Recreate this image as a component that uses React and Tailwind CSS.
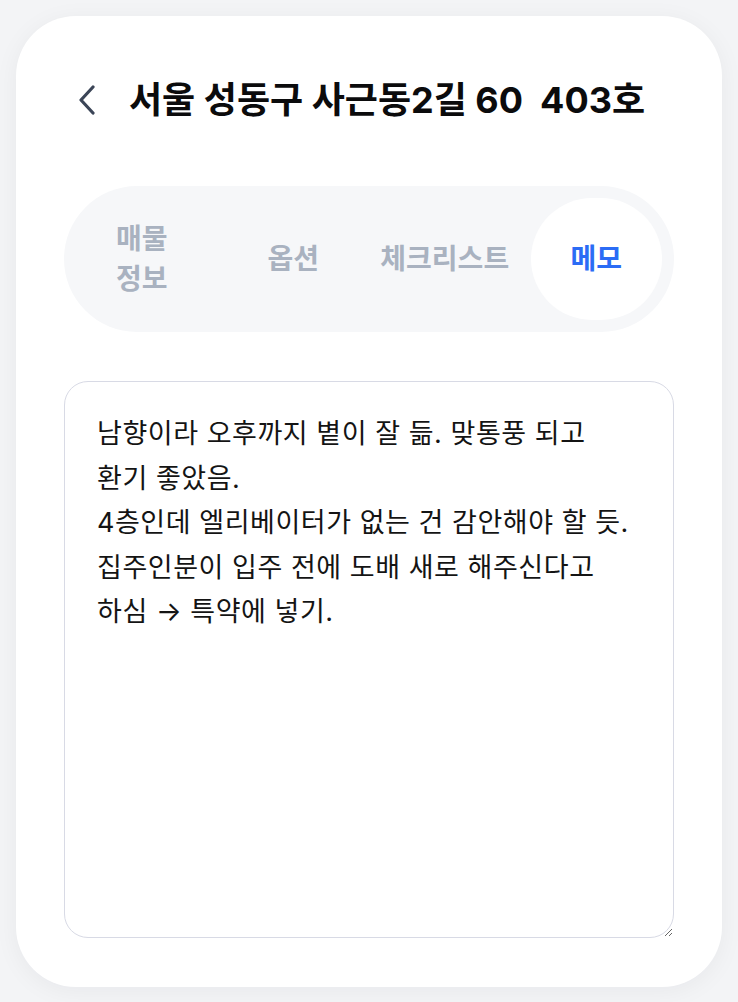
import React, { useState } from "react";

const tabs = ["매물 정보", "옵션", "체크리스트", "메모"];

const initialMemo =
  "남향이라 오후까지 볕이 잘 듦. 맞통풍 되고\n환기 좋았음.\n4층인데 엘리베이터가 없는 건 감안해야 할 듯.\n집주인분이 입주 전에 도배 새로 해주신다고\n하심 → 특약에 넣기.";

export default function App() {
  const [active, setActive] = useState("메모");
  const [memo, setMemo] = useState(initialMemo);

  return (
    <div className="min-h-screen bg-[#f3f4f6] p-4 font-['Inter','Noto_Sans_CJK_KR',sans-serif]">
      <div className="bg-white rounded-[60px] shadow-[0_4px_24px_rgba(15,23,42,0.05)] px-12 pt-12 pb-[49px]">
        <div className="h-[72px] flex items-center">
          <button className="w-[33px] ml-[14px] mr-[18px] flex items-center text-[#3b4557]">
            <svg width="18" height="30" viewBox="0 0 18 30" fill="none">
              <path
                d="M15 2 L3 15 L15 28"
                stroke="currentColor"
                strokeWidth="3.2"
                strokeLinecap="round"
                strokeLinejoin="round"
              />
            </svg>
          </button>
          <h1 className="text-[36px] font-bold text-[#0b0b0c] whitespace-pre">
            서울 성동구 사근동2길 60  403호
          </h1>
        </div>

        <div className="mt-[50px] bg-[#f6f7f9] rounded-full p-3 grid grid-cols-4 gap-5">
          {tabs.map((t) => (
            <button
              key={t}
              onClick={() => setActive(t)}
              className={
                active === t
                  ? "h-[122px] rounded-full bg-white flex items-center justify-center px-4 text-center break-keep text-[28px] leading-10 font-bold text-[#2b6cf5]"
                  : "h-[122px] rounded-full flex items-center justify-center px-4 text-center break-keep text-[28px] leading-10 font-bold text-[#a9b2c0]"
              }
            >
              {t}
            </button>
          ))}
        </div>

        <textarea
          value={memo}
          onChange={(e) => setMemo(e.target.value)}
          className="mt-[49px] block w-full h-[557px] border border-[#d8dae5] rounded-3xl px-8 pt-[30px] text-[27px] tracking-[0.02em] leading-[44.5px] text-[#141414] outline-none"
        />
      </div>
    </div>
  );
}
